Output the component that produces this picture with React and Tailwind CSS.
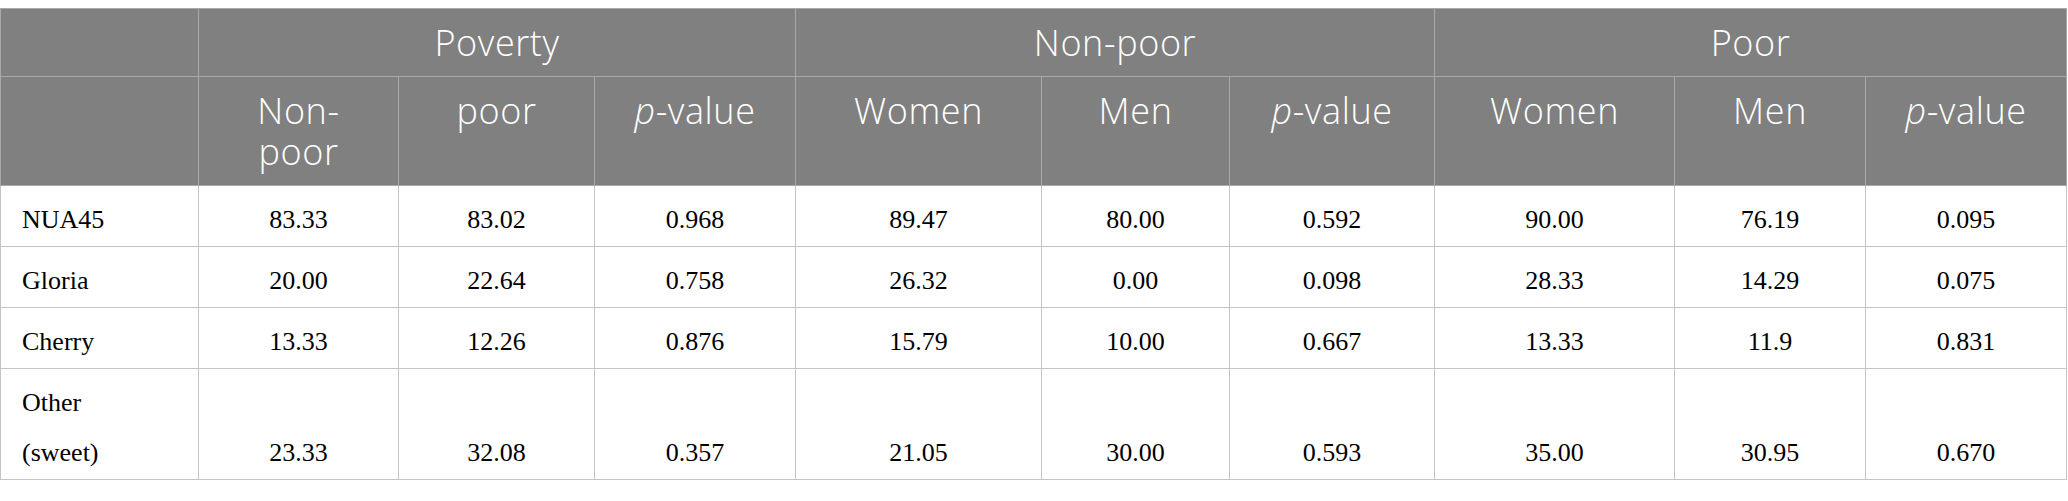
const rows = [
  ["NUA45", "83.33", "83.02", "0.968", "89.47", "80.00", "0.592", "90.00", "76.19", "0.095"],
  ["Gloria", "20.00", "22.64", "0.758", "26.32", "0.00", "0.098", "28.33", "14.29", "0.075"],
  ["Cherry", "13.33", "12.26", "0.876", "15.79", "10.00", "0.667", "13.33", "11.9", "0.831"],
  ["Other (sweet)", "23.33", "32.08", "0.357", "21.05", "30.00", "0.593", "35.00", "30.95", "0.670"],
];

const widths = [
  "w-[198px]", "w-[200px]", "w-[196px]", "w-[201px]", "w-[246px]",
  "w-[188px]", "w-[205px]", "w-[240px]", "w-[191px]", "w-[201px]",
];

function PValue() {
  return (
    <>
      <span className="italic">p</span>-value
    </>
  );
}

export default function App() {
  const head = "border border-[#a9a9a9] px-3 py-[13px] text-center align-top font-light";
  return (
    <div className="bg-white w-[2068px] h-[501px] pt-[8px]">
      <table className="table-fixed border-collapse w-[2067px]">
        <colgroup>
          {widths.map((w, i) => (
            <col key={i} className={w} />
          ))}
        </colgroup>

        {/* Cabecera */}
        <thead className="bg-[#7f807f] text-white font-['Open_Sans',sans-serif] text-[36px] leading-[41px] tracking-[0.6px]">
          <tr>
            <th className={head}></th>
            <th colSpan={3} className={head}>Poverty</th>
            <th colSpan={3} className={head}>Non-poor</th>
            <th colSpan={3} className={head}>Poor</th>
          </tr>
          <tr>
            <th className={head}></th>
            <th className={head}>
              <div>Non-</div>
              <div>poor</div>
            </th>
            <th className={head}>poor</th>
            <th className={head}><PValue /></th>
            <th className={head}>Women</th>
            <th className={head}>Men</th>
            <th className={head}><PValue /></th>
            <th className={head}>Women</th>
            <th className={head}>Men</th>
            <th className={head}><PValue /></th>
          </tr>
        </thead>

        {/* Cuerpo */}
        <tbody className="font-['Liberation_Serif',serif] text-[26px] leading-[50px] text-black">
          {rows.map((r) => (
            <tr key={r[0]}>
              {r.map((c, i) => (
                <td
                  key={i}
                  className={
                    "border border-[#c4c4c4] pt-[9px] pb-[1px] align-bottom " +
                    (i === 0 ? "text-left pl-[21px] pr-2" : "text-center px-2")
                  }
                >
                  {i === 0 && c === "Other (sweet)" ? (
                    <>
                      <div>Other</div>
                      <div>(sweet)</div>
                    </>
                  ) : (
                    c
                  )}
                </td>
              ))}
            </tr>
          ))}
        </tbody>
      </table>
    </div>
  );
}
